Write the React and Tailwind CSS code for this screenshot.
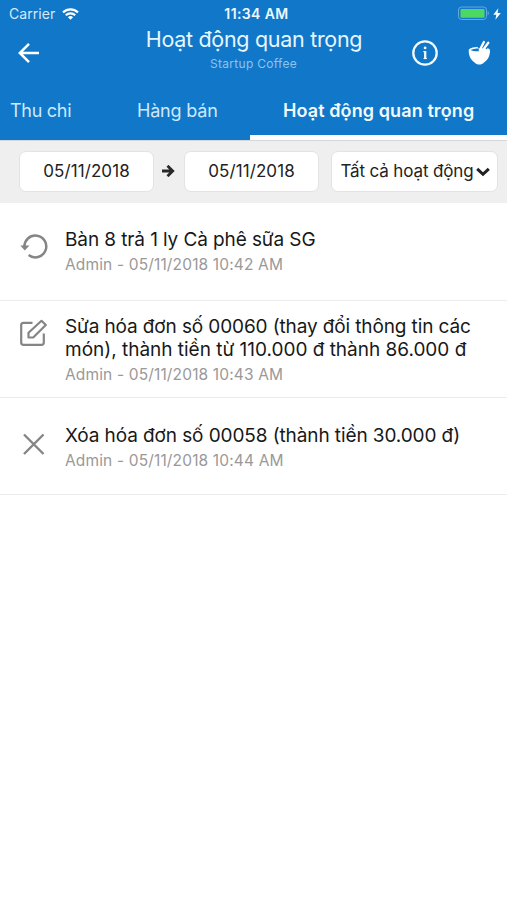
import React from 'react';

function StatusBar() {
  return (
    <div className="flex h-[27px] items-center justify-between pl-[9px] pr-[6px] text-[14px] leading-[27px]">
      <div className="flex w-[120px] items-center gap-[7px] text-[#d6eafb]">
        <span className="tracking-[0.05px]">Carrier</span>
        <svg width="17" height="12" viewBox="0 0 17 12" fill="none" stroke="#fff" strokeWidth="2.2">
          <path d="M1 4.4a10.8 10.8 0 0 1 15 0" />
          <path d="M3.8 7.2a6.8 6.8 0 0 1 9.4 0" />
          <path d="M8.5 11.8 5.9 9.2a3.8 3.8 0 0 1 5.2 0Z" fill="#fff" stroke="none" />
        </svg>
      </div>
      <span className="pl-[3px] text-[14px] font-semibold tracking-[0.4px] text-[#edf8ff]">11:34 AM</span>
      <div className="flex w-[120px] items-center justify-end gap-[4px]">
        <svg width="32" height="15" viewBox="0 0 32 15">
          <rect x="1.500" y="1" width="28" height="12.5" rx="3" fill="#1678ca" stroke="#65a9df" strokeWidth="1" />
          <rect x="3.500" y="3" width="24" height="8.8" rx="1" fill="#4bd964" />
          <path d="M30.600 5c1.6.7 1.6 3.8 0 4.5Z" fill="#65a9df" />
        </svg>
        <svg width="8" height="12" viewBox="0 0 8 12" fill="#fff">
          <path d="M5.3.2.3 6.8h3L2.4 11.8 7.8 5H4.6Z" />
        </svg>
      </div>
    </div>
  );
}

function TitleBar() {
  return (
    <div className="flex h-[55px] items-start">
      <div className="flex w-[110px] pl-[17px] pt-[15px]">
        <svg width="23" height="22" viewBox="0 0 23 22" fill="none" stroke="#fff" strokeWidth="2.5">
          <path d="M22 11H3M12 1.8 2.8 11l9.2 9.2" />
        </svg>
      </div>
      <div className="flex flex-1 flex-col items-center">
        <h1 className="whitespace-nowrap pl-px text-[21.5px] leading-[25px] tracking-[-0.3px] text-[#e6f6ff]">Hoạt động quan trọng</h1>
        <p className="mt-[4px] text-[12px] leading-[15px] tracking-[0.3px] text-[#8dc3ee]">Startup Coffee</p>
      </div>
      <div className="flex w-[110px] gap-[28px] pl-[14px] pt-[12px]">
        <svg width="28" height="28" viewBox="0 0 28 28" fill="none" stroke="#f1faff" strokeWidth="2.3">
          <circle cx="14" cy="14" r="11.7" />
          <path d="M12.300 12.700h1.700M12.500 19.500h3.400" strokeWidth="1.200" />
          <path d="M14.200 12.100v8" strokeWidth="2.300" />
          <circle cx="14.100" cy="8.900" r="1.400" fill="#f1faff" stroke="none" />
        </svg>
        <svg width="26" height="28" viewBox="0 0 26 28">
          <path d="M1.700 11.500C1.700 9.300 5.500 8 12.300 8s10.700 1.300 10.700 3.500c0 6-2.500 9.800-6 12-1.500 1.500-2.700 2-4.700 2s-3.200-.5-4.700-2C4.200 21.300 1.700 17.500 1.700 11.500Z" fill="#fff" />
          <path d="M3.600 11C5.200 9.900 8 9.400 12.300 9.400V12.300C8.500 12.500 5 12.200 3.600 11Z" fill="#1177c8" />
          <path d="m12 9.200 4.200-8.200M15.600 9.500l5.700-7.700M18.500 9.400l3.800-5" fill="none" stroke="#1177c8" strokeWidth="3.200" />
          <path d="m12.800 11 4.100-8M15.600 11.500l5.700-7.800" fill="none" stroke="#fff" strokeWidth="2.300" strokeLinecap="round" />
        </svg>
      </div>
    </div>
  );
}

function Tabs() {
  return (
    <nav className="flex h-[58px] text-[18px] leading-[57px] text-[#cde9ff]">
      <div className="w-[104px] whitespace-nowrap pl-[10px] tracking-[-0.28px]">Thu chi</div>
      <div className="w-[146px] whitespace-nowrap pl-[33px] tracking-[-0.18px]">Hàng bán</div>
      <div className="flex-1 whitespace-nowrap border-b-[5px] border-white pl-[33px] font-semibold tracking-[0.1px] text-[#f0faff]">Hoạt động quan trọng</div>
    </nav>
  );
}

const fieldStyle = 'flex h-[41px] items-center justify-center whitespace-nowrap rounded-[7px] border border-[#e3e3e3] bg-white';

function Filters() {
  return (
    <div className="flex h-[63px] items-center border-t border-[#d5d8db] bg-[#efefef] pb-px pl-[19px] text-[17px] text-[#222]">
      <div className={`${fieldStyle} w-[135px] tracking-[0.1px]`}>05/11/2018</div>
      <svg className="mb-[2px] ml-[8px] mr-[9px]" width="13" height="12" viewBox="0 0 13 12" fill="none" stroke="#292929" strokeWidth="2.8">
        <path d="M0 6h10.500M5.500.8l5.200 5.200-5.200 5.200" />
      </svg>
      <div className={`${fieldStyle} w-[135px] tracking-[0.1px]`}>05/11/2018</div>
      <div className={`${fieldStyle} ml-[12px] w-[167px] gap-[3px] pl-[2px]`}>
        <span className="tracking-[-0.14px]">Tất cả hoạt động</span>
        <svg width="14" height="10" viewBox="0 0 14 10" fill="none" stroke="#222" strokeWidth="3">
          <path d="m1.200 1.800 5.800 5.500 5.800-5.500" />
        </svg>
      </div>
    </div>
  );
}

function UndoIcon() {
  return (
    <svg width="28" height="28" viewBox="0 0 28 28" fill="none">
      <path d="M4.500 14.500A10.900 10.900 0 1 1 8.600 22" stroke="#858585" strokeWidth="2.500" />
      <path d="M.300 12.500h9.200L4.800 17.600Z" fill="#858585" />
    </svg>
  );
}

function EditIcon() {
  return (
    <svg width="28" height="28" viewBox="0 0 28 28" fill="none" stroke="#858585" strokeWidth="2.200">
      <path d="M12.500 3.800H3.500Q1.200 3.800 1.200 6v17.500q0 2.300 2.300 2.300h18q2.300 0 2.300-2.300v-9" />
      <path d="M8.500 18.500v-4.800L21.500 1.800l4.300 4.200-12.600 12.500Z" strokeLinejoin="round" />
    </svg>
  );
}

function CloseIcon() {
  return (
    <svg width="28" height="28" viewBox="0 0 28 28" fill="none" stroke="#858585" strokeWidth="2.400">
      <path d="m4 4.500 19.500 19.500M23.500 4.500 4 24" />
    </svg>
  );
}

function Activity({ icon, iconTop, lines, time, first }) {
  return (
    <li className={`flex items-start border-b border-[#ececec] pl-[20px] ${first ? 'h-[98px]' : 'h-[97px]'}`}>
      <div className={`w-[45px] shrink-0 ${iconTop}`}>{icon}</div>
      <div className={lines.length > 1 ? 'pt-[14px]' : first ? 'pt-[25px]' : 'pt-[26px]'}>
        {lines.map((line) => (
          <p key={line.text} className={`whitespace-nowrap text-[19px] leading-[23px] text-[#181818] ${line.spacing}`}>{line.text}</p>
        ))}
        <p className="mt-[5px] whitespace-nowrap text-[15.500px] leading-[18px] tracking-[0.15px] text-[#999]">{time}</p>
      </div>
    </li>
  );
}

export default function App() {
  return (
    <div className="h-[900px] w-[507px] overflow-hidden bg-white font-['Inter','Noto_Sans',sans-serif]">
      <header className="bg-[#1177c8]">
        <StatusBar />
        <TitleBar />
        <Tabs />
      </header>
      <Filters />
      <ul>
        <Activity
          first
          icon={<UndoIcon />}
          iconTop="pt-[30px]"
          lines={[{ text: 'Bàn 8 trả 1 ly Cà phê sữa SG', spacing: 'tracking-[-0.1px]' }]}
          time="Admin - 05/11/2018 10:42 AM"
        />
        <Activity
          icon={<EditIcon />}
          iconTop="pt-[18px]"
          lines={[
            { text: 'Sửa hóa đơn số 00060 (thay đổi thông tin các', spacing: 'tracking-[-0.12px]' },
            { text: 'món), thành tiền từ 110.000 đ thành 86.000 đ', spacing: 'tracking-[-0.01px]' },
          ]}
          time="Admin - 05/11/2018 10:43 AM"
        />
        <Activity
          icon={<CloseIcon />}
          iconTop="pt-[32px]"
          lines={[{ text: 'Xóa hóa đơn số 00058 (thành tiền 30.000 đ)', spacing: 'tracking-[-0.1px]' }]}
          time="Admin - 05/11/2018 10:44 AM"
        />
      </ul>
    </div>
  );
}
